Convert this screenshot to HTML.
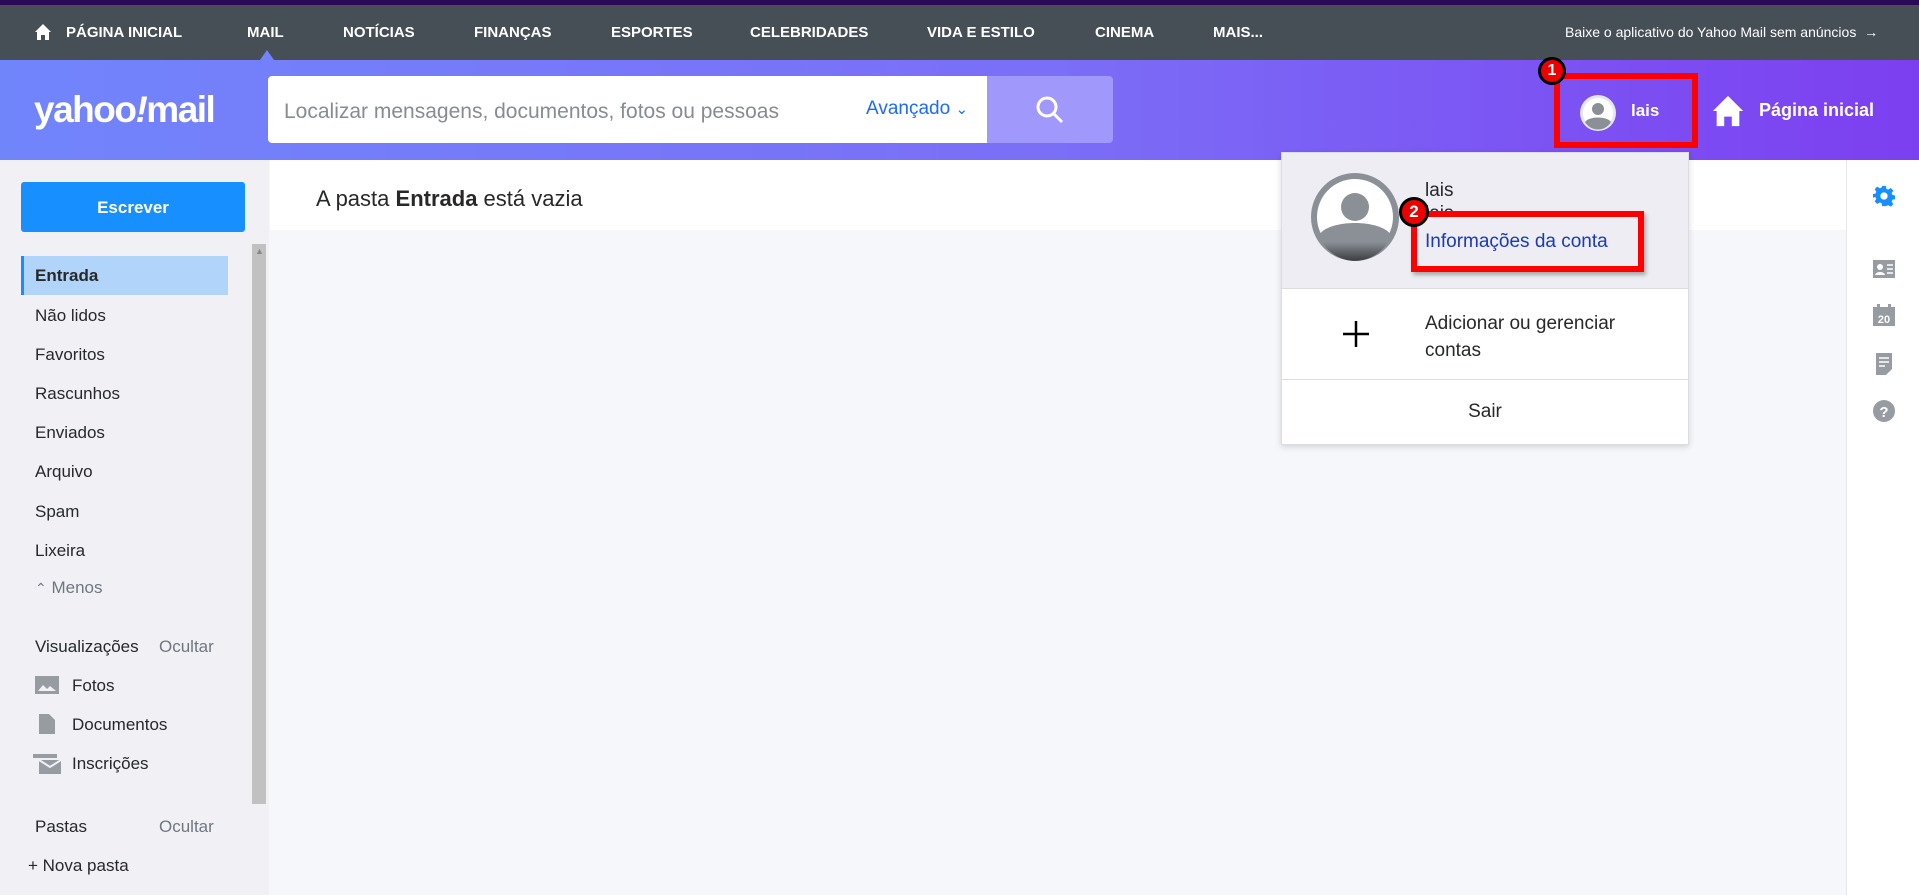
<!DOCTYPE html>
<html><head><meta charset="utf-8"><style>
*{margin:0;padding:0;box-sizing:border-box}
body{width:1919px;height:895px;overflow:hidden;font-family:"Liberation Sans",sans-serif;background:#f5f7fa;position:relative}
.a{position:absolute;white-space:nowrap}
.nav{font-weight:bold;color:#fff;font-size:15px;top:24px}
.f{font-size:17px;color:#26282a;left:35px}
.ri{position:absolute;left:1873px;width:22px;height:22px}
</style></head><body>
<div class="a" style="left:0;top:0;width:1919px;height:5px;background:#2a0a57"></div>
<div class="a" style="left:0;top:5px;width:1919px;height:55px;background:#464e56"></div>
<svg class="a" style="left:34px;top:23px" width="18" height="18" viewBox="0 0 18 18"><path d="M9 1L1 9h2v8h4v-5h4v5h4V9h2z" fill="#fff"/></svg>
<div class="a nav" style="left:66px">PÁGINA INICIAL</div>
<div class="a nav" style="left:247px">MAIL</div>
<div class="a nav" style="left:343px">NOTÍCIAS</div>
<div class="a nav" style="left:474px">FINANÇAS</div>
<div class="a nav" style="left:611px">ESPORTES</div>
<div class="a nav" style="left:750px">CELEBRIDADES</div>
<div class="a nav" style="left:927px">VIDA E ESTILO</div>
<div class="a nav" style="left:1095px">CINEMA</div>
<div class="a nav" style="left:1213px">MAIS...</div>
<div class="a" style="left:1565px;top:24px;color:#fff;font-size:14px">Baixe o aplicativo do Yahoo Mail sem anúncios &nbsp;→</div>
<div class="a" style="left:0;top:60px;width:1919px;height:100px;background:linear-gradient(90deg,#7185fb 0%,#7b6ef7 55%,#7c3ff0 100%)"></div>
<div class="a" style="left:260px;top:50px;width:0;height:0;border-left:7px solid transparent;border-right:7px solid transparent;border-bottom:10px solid #7185fb"></div>
<div class="a" style="left:34px;top:89px;color:#fff;font-size:37px;font-weight:bold;letter-spacing:-1.5px">yahoo<i>!</i>mail</div>
<div class="a" style="left:268px;top:76px;width:720px;height:67px;background:#fff;border-radius:4px 0 0 4px"></div>
<div class="a" style="left:284px;top:100px;font-size:21px;color:#878c91">Localizar mensagens, documentos, fotos ou pessoas</div>
<div class="a" style="left:866px;top:98px;font-size:19px;color:#1d6cf8">Avançado <span style="font-size:15px">⌄</span></div>
<div class="a" style="left:987px;top:76px;width:126px;height:67px;background:#a198fb;border-radius:0 4px 4px 0"></div>
<svg class="a" style="left:1035px;top:95px" width="30" height="30" viewBox="0 0 30 30"><circle cx="12" cy="12" r="9" stroke="#fff" stroke-width="3" fill="none"/><path d="M19 19l8 8" stroke="#fff" stroke-width="3"/></svg>
<svg class="a" style="left:1580px;top:95px" width="36" height="36" viewBox="0 0 36 36"><circle cx="18" cy="18" r="18" fill="#e6e7ea"/><circle cx="18" cy="18" r="15" fill="#fff"/><circle cx="18" cy="14" r="6" fill="#8b9097"/><path d="M5 27c4-6 22-6 26 0a15 15 0 0 1-26 0z" fill="#8b9097"/></svg>
<div class="a" style="left:1631px;top:101px;color:#fff;font-weight:bold;font-size:17px">lais</div>
<div class="a" style="left:1554px;top:73px;width:144px;height:75px;border:6px solid #f00"></div>
<div class="a" style="left:1538px;top:57px;width:28px;height:28px;border-radius:50%;background:#e00;border:3px solid #000;color:#fff;font-weight:bold;font-size:16px;text-align:center;line-height:22px">1</div>
<svg class="a" style="left:1711px;top:94px" width="34" height="34" viewBox="0 0 18 18"><path d="M9 1L1 9h2v8h4v-5h4v5h4V9h2z" fill="#fff"/></svg>
<div class="a" style="left:1759px;top:100px;color:#fff;font-weight:bold;font-size:18px">Página inicial</div>
<div class="a" style="left:0;top:160px;width:269px;height:735px;background:#f1f1f5"></div>
<div class="a" style="left:21px;top:182px;width:224px;height:50px;background:#188fff;border-radius:3px;color:#fff;font-weight:bold;font-size:17px;text-align:center;line-height:52px">Escrever</div>
<div class="a" style="left:252px;top:244px;width:14px;height:560px;background:#c1c1c1"></div>
<div class="a" style="left:255px;top:246px;font-size:9px;color:#888">▲</div>
<div class="a" style="left:21px;top:256px;width:207px;height:39px;background:#b1d4fa;border-left:3px solid #1a8cff"></div>
<div class="a f" style="top:266px;font-weight:bold">Entrada</div>
<div class="a f" style="top:306px">Não lidos</div>
<div class="a f" style="top:345px">Favoritos</div>
<div class="a f" style="top:384px">Rascunhos</div>
<div class="a f" style="top:423px">Enviados</div>
<div class="a f" style="top:462px">Arquivo</div>
<div class="a f" style="top:502px">Spam</div>
<div class="a f" style="top:541px">Lixeira</div>
<div class="a f" style="top:578px;left:35px;color:#6e7780"><span style="font-size:14px">⌃</span> Menos</div>
<div class="a f" style="top:637px">Visualizações</div>
<div class="a f" style="top:637px;left:159px;color:#6e7780">Ocultar</div>
<svg class="a" style="left:35px;top:676px" width="24" height="18"><rect width="24" height="18" fill="#979ca3"/><path d="M3 15l5-6 4 4 3-3 6 5z" fill="#f1f1f5"/></svg>
<div class="a f" style="top:676px;left:72px">Fotos</div>
<svg class="a" style="left:39px;top:714px" width="16" height="20"><path d="M0 0h10l6 6v14H0z" fill="#979ca3"/></svg>
<div class="a f" style="top:715px;left:72px">Documentos</div>
<svg class="a" style="left:33px;top:754px" width="28" height="20"><rect x="0" y="0" width="24" height="4" fill="#979ca3"/><rect x="6" y="6" width="22" height="14" fill="#979ca3"/><path d="M6 6l11 7 11-7" stroke="#f1f1f5" stroke-width="2" fill="none"/></svg>
<div class="a f" style="top:754px;left:72px">Inscrições</div>
<div class="a f" style="top:817px">Pastas</div>
<div class="a f" style="top:817px;left:159px;color:#6e7780">Ocultar</div>
<div class="a f" style="top:856px;left:28px">+ Nova pasta</div>
<div class="a" style="left:270px;top:160px;width:1576px;height:70px;background:#fff"></div>
<div class="a" style="left:316px;top:186px;font-size:22px;color:#26282a">A pasta <b>Entrada</b> está vazia</div>
<div class="a" style="left:1846px;top:160px;width:73px;height:735px;background:#fff;border-left:1px solid #e6e8ec"></div>
<svg class="ri" style="top:185px" viewBox="0 0 24 24"><path fill="#188fff" d="M10 1h4l.6 3.2 2 .9 2.8-1.8 2.8 2.8-1.8 2.8.9 2 3.2.6v4l-3.2.6-.9 2 1.8 2.8-2.8 2.8-2.8-1.8-2 .9L14 23h-4l-.6-3.2-2-.9-2.8 1.8-2.8-2.8 1.8-2.8-.9-2L-.5 14v-4l3.2-.6.9-2L1.8 4.6l2.8-2.8 2.8 1.8 2-.9zM12 8a4 4 0 1 0 0 8 4 4 0 0 0 0-8z"/></svg>
<svg class="ri" style="top:258px" viewBox="0 0 22 22"><rect x="0" y="2" width="22" height="18" fill="#979ca3"/><circle cx="7" cy="9" r="3" fill="#fff"/><path d="M2 17c1-4 9-4 10 0z" fill="#fff"/><path d="M14 7h6M14 11h6M14 15h6" stroke="#fff" stroke-width="1.5"/></svg>
<svg class="ri" style="top:304px" viewBox="0 0 22 22"><rect x="0" y="3" width="22" height="19" fill="#979ca3"/><rect x="4" y="0" width="3" height="5" fill="#979ca3"/><rect x="15" y="0" width="3" height="5" fill="#979ca3"/><text x="11" y="19" font-size="11" font-weight="bold" fill="#fff" text-anchor="middle" font-family="Liberation Sans">20</text></svg>
<svg class="ri" style="top:353px" viewBox="0 0 22 22"><path d="M3 0h16v16l-6 6H3z" fill="#979ca3"/><path d="M6 5h10M6 9h10M6 13h6" stroke="#fff" stroke-width="1.5"/></svg>
<svg class="ri" style="top:400px" viewBox="0 0 22 22"><circle cx="11" cy="11" r="11" fill="#979ca3"/><text x="11" y="17" font-size="15" font-weight="bold" fill="#fff" text-anchor="middle" font-family="Liberation Sans">?</text></svg>
<div class="a" style="left:1281px;top:152px;width:408px;height:293px;background:#fff;border:1px solid #dcdde2;box-shadow:0 2px 6px rgba(0,0,0,.15)"></div>
<div class="a" style="left:1282px;top:153px;width:406px;height:136px;background:#ededf3;border-bottom:1px solid #dcdde2"></div>
<svg class="a" style="left:1311px;top:173px" width="88" height="88" viewBox="0 0 88 88"><defs><linearGradient id="g" x1="0" y1="0" x2="0" y2="1"><stop offset=".5" stop-color="#8b9097"/><stop offset="1" stop-color="#3a3d41"/></linearGradient></defs><circle cx="44" cy="44" r="44" fill="#8b9097"/><circle cx="44" cy="44" r="38" fill="#fff"/><circle cx="44" cy="34" r="14" fill="#8b9097"/><path d="M8 62c10-16 62-16 72 0a38 38 0 0 1-72 0z" fill="url(#g)"/></svg>
<div class="a" style="left:1425px;top:180px;font-size:19px;color:#26282a">lais</div>
<div class="a" style="left:1425px;top:203px;font-size:19px;color:#26282a">lais</div>
<div class="a" style="left:1411px;top:211px;width:233px;height:61px;border:6px solid #f00;background:#ededf3;box-shadow:2px 3px 4px rgba(0,0,0,.3)"></div>
<div class="a" style="left:1425px;top:231px;font-size:19px;color:#1c39bb">Informações da conta</div>
<div class="a" style="left:1399px;top:197px;width:30px;height:30px;border-radius:50%;background:#e00;border:3px solid #000;color:#fff;font-weight:bold;font-size:17px;text-align:center;line-height:24px">2</div>
<svg class="a" style="left:1343px;top:321px" width="26" height="26"><path d="M13 0v26M0 13h26" stroke="#000" stroke-width="2.5"/></svg>
<div class="a" style="left:1425px;top:310px;font-size:19px;color:#26282a;line-height:27px">Adicionar ou gerenciar<br>contas</div>
<div class="a" style="left:1282px;top:379px;width:406px;height:1px;background:#dcdde2"></div>
<div class="a" style="left:1282px;top:401px;width:406px;text-align:center;font-size:19px;color:#26282a">Sair</div>
</body></html>
